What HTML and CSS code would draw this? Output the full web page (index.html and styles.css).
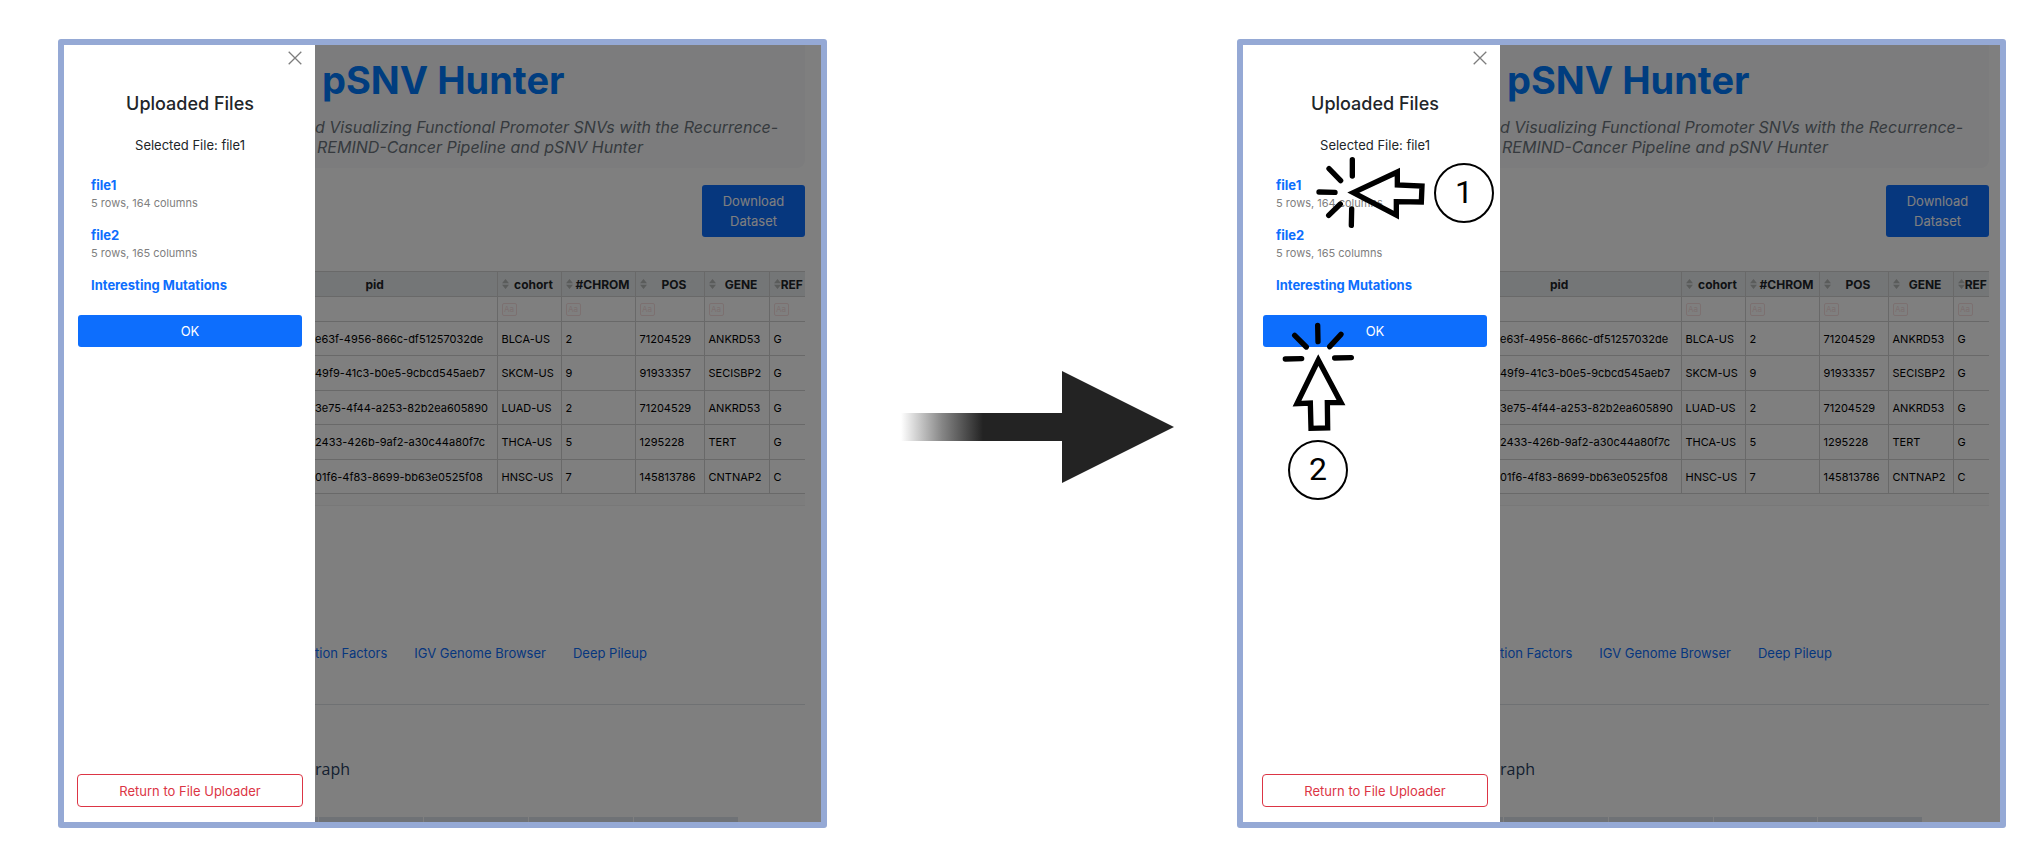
FILE: index.html
```html
<!DOCTYPE html>
<html lang="en">
<head>
<meta charset="utf-8">
<title>pSNV Hunter</title>
<link rel="stylesheet" href="styles.css">
</head>
<body>
<svg class="defs" aria-hidden="true">
  <symbol id="sort" viewBox="0 0 7 10"><path d="M3.5 0 7 4.3H0zM0 5.7h7L3.5 10z" fill="#b4b8b6"/></symbol>
  <symbol id="close" viewBox="0 0 14 14"><path d="M.7.7l12.600 12.600M13.300.7L.7 13.300" stroke="#7d7d7d" stroke-width="1.300" fill="none"/></symbol>
</svg>

<section class="frame">
  <aside class="drawer">
    <button class="close" aria-label="Close"><svg><use href="#close"/></svg></button>
    <h2 class="drawer-title">Uploaded Files</h2>
    <p class="selected">Selected File: file1</p>
    <ul class="files">
      <li><a href="#file1">file1</a><small>5 rows, 164 columns</small></li>
      <li><a href="#file2">file2</a><small>5 rows, 165 columns</small></li>
      <li><a href="#interesting">Interesting Mutations</a></li>
    </ul>
    <button class="ok">OK</button>
    <button class="return">Return to File Uploader</button>
  </aside>
  <main class="page">
    <header class="hero">
      <h1>pSNV Hunter</h1>
      <p>d Visualizing Functional Promoter SNVs with the Recurrence-</p>
      <p class="second">REMIND-Cancer Pipeline and pSNV Hunter</p>
    </header>
    <button class="download">Download Dataset</button>
    <div class="table-wrap">
      <table class="grid">
        <colgroup><col><col class="c64"><col class="c74"><col class="c69"><col class="c65"><col class="c36"></colgroup>
        <thead>
          <tr>
            <th class="pid">pid</th>
            <th><div><button aria-label="Sort"><svg><use href="#sort"/></svg></button><span>cohort</span></div></th>
            <th><div><button aria-label="Sort"><svg><use href="#sort"/></svg></button><span>#CHROM</span></div></th>
            <th><div><button aria-label="Sort"><svg><use href="#sort"/></svg></button><span>POS</span></div></th>
            <th><div><button aria-label="Sort"><svg><use href="#sort"/></svg></button><span>GENE</span></div></th>
            <th><div><button aria-label="Sort"><svg><use href="#sort"/></svg></button><span>REF</span></div></th>
          </tr>
          <tr class="filters"><td></td><td><button>Aa</button></td><td><button>Aa</button></td><td><button>Aa</button></td><td><button>Aa</button></td><td><button>Aa</button></td></tr>
        </thead>
        <tbody>
          <tr><td>e63f-4956-866c-df51257032de</td><td>BLCA-US</td><td>2</td><td>71204529</td><td>ANKRD53</td><td>G</td></tr>
          <tr><td>49f9-41c3-b0e5-9cbcd545aeb7</td><td>SKCM-US</td><td>9</td><td>91933357</td><td>SECISBP2</td><td>G</td></tr>
          <tr><td>3e75-4f44-a253-82b2ea605890</td><td>LUAD-US</td><td>2</td><td>71204529</td><td>ANKRD53</td><td>G</td></tr>
          <tr><td>2433-426b-9af2-a30c44a80f7c</td><td>THCA-US</td><td>5</td><td>1295228</td><td>TERT</td><td>G</td></tr>
          <tr><td>01f6-4f83-8699-bb63e0525f08</td><td>HNSC-US</td><td>7</td><td>145813786</td><td>CNTNAP2</td><td>C</td></tr>
        </tbody>
      </table>
      <div class="scroll-track"></div>
    </div>
    <nav class="tabs"><a href="#tf">tion Factors</a><a href="#igv">IGV Genome Browser</a><a href="#pileup">Deep Pileup</a></nav>
    <h3 class="graph">raph</h3>
    <div class="strip"><i></i><i></i><i></i><i></i><i></i></div>
    <div class="backdrop"></div>
  </main>
</section>

<svg class="arrow" viewBox="0 0 273 112" role="img" aria-label="Next step">
  <defs><linearGradient id="fade" gradientUnits="userSpaceOnUse" x1="0" y1="0" x2="82" y2="0"><stop offset="0" stop-color="#232323" stop-opacity="0"/><stop offset=".5" stop-color="#232323" stop-opacity=".55"/><stop offset="1" stop-color="#232323"/></linearGradient></defs>
  <path d="M0 42h161V0l112 56-112 56V70H0z" fill="url(#fade)"/>
</svg>

<section class="frame frame-after">
  <aside class="drawer">
    <button class="close" aria-label="Close"><svg><use href="#close"/></svg></button>
    <h2 class="drawer-title">Uploaded Files</h2>
    <p class="selected">Selected File: file1</p>
    <ul class="files">
      <li><a href="#file1">file1</a><small>5 rows, 164 columns</small></li>
      <li><a href="#file2">file2</a><small>5 rows, 165 columns</small></li>
      <li><a href="#interesting">Interesting Mutations</a></li>
    </ul>
    <button class="ok">OK</button>
    <button class="return">Return to File Uploader</button>
  </aside>
  <main class="page">
    <header class="hero">
      <h1>pSNV Hunter</h1>
      <p>d Visualizing Functional Promoter SNVs with the Recurrence-</p>
      <p class="second">REMIND-Cancer Pipeline and pSNV Hunter</p>
    </header>
    <button class="download">Download Dataset</button>
    <div class="table-wrap">
      <table class="grid">
        <colgroup><col><col class="c64"><col class="c74"><col class="c69"><col class="c65"><col class="c36"></colgroup>
        <thead>
          <tr>
            <th class="pid">pid</th>
            <th><div><button aria-label="Sort"><svg><use href="#sort"/></svg></button><span>cohort</span></div></th>
            <th><div><button aria-label="Sort"><svg><use href="#sort"/></svg></button><span>#CHROM</span></div></th>
            <th><div><button aria-label="Sort"><svg><use href="#sort"/></svg></button><span>POS</span></div></th>
            <th><div><button aria-label="Sort"><svg><use href="#sort"/></svg></button><span>GENE</span></div></th>
            <th><div><button aria-label="Sort"><svg><use href="#sort"/></svg></button><span>REF</span></div></th>
          </tr>
          <tr class="filters"><td></td><td><button>Aa</button></td><td><button>Aa</button></td><td><button>Aa</button></td><td><button>Aa</button></td><td><button>Aa</button></td></tr>
        </thead>
        <tbody>
          <tr><td>e63f-4956-866c-df51257032de</td><td>BLCA-US</td><td>2</td><td>71204529</td><td>ANKRD53</td><td>G</td></tr>
          <tr><td>49f9-41c3-b0e5-9cbcd545aeb7</td><td>SKCM-US</td><td>9</td><td>91933357</td><td>SECISBP2</td><td>G</td></tr>
          <tr><td>3e75-4f44-a253-82b2ea605890</td><td>LUAD-US</td><td>2</td><td>71204529</td><td>ANKRD53</td><td>G</td></tr>
          <tr><td>2433-426b-9af2-a30c44a80f7c</td><td>THCA-US</td><td>5</td><td>1295228</td><td>TERT</td><td>G</td></tr>
          <tr><td>01f6-4f83-8699-bb63e0525f08</td><td>HNSC-US</td><td>7</td><td>145813786</td><td>CNTNAP2</td><td>C</td></tr>
        </tbody>
      </table>
      <div class="scroll-track"></div>
    </div>
    <nav class="tabs"><a href="#tf">tion Factors</a><a href="#igv">IGV Genome Browser</a><a href="#pileup">Deep Pileup</a></nav>
    <h3 class="graph">raph</h3>
    <div class="strip"><i></i><i></i><i></i><i></i><i></i></div>
    <div class="backdrop"></div>
  </main>

  <svg class="click click-1" viewBox="255 378 336 222" aria-hidden="true">
    <g fill="none" stroke="#000" stroke-width="16" stroke-linecap="round" stroke-linejoin="round">
      <path d="M367 389v49M297 416l35 36M267 486l48 1M296 556l35-34M365 537l-1 49"/>
      <path stroke-linejoin="miter" d="M370 488L502 426V465L576 468 574 516 499 515V555Z"/>
    </g>
  </svg>
  <span class="step step-1">1</span>
  <svg class="click click-2" viewBox="156 216 222 333" aria-hidden="true">
    <g fill="none" stroke="#000" stroke-width="16" stroke-linecap="round" stroke-linejoin="round">
      <path d="M263 226l1 49M194 256l35 35M333 253l-34 37M166 327l49-1M314 324l50-1"/>
      <path stroke-linejoin="miter" d="M265 330L201 461 241 459 243 535 293 534 292 458 333 458Z"/>
    </g>
  </svg>
  <span class="step step-2">2</span>
</section>
</body>
</html>
```

FILE: styles.css
```css
* { box-sizing: border-box; }

body {
  margin: 0;
  min-height: 100vh;
  padding: 39px 35px 31px 58px;
  display: grid;
  grid-template-columns: 769fr 410fr 769fr;
  background: #fff;
  color: #212529;
  font-family: Inter, "Liberation Sans", sans-serif;
  font-size: 13px;
}

h1, h2, h3, p, ul { margin: 0; padding: 0; }
ul { list-style: none; }
a { color: #0d6efd; text-decoration: none; }
button { font: inherit; padding: 0; border: 0; background: none; cursor: pointer; }
svg { display: block; }
.defs { position: absolute; width: 0; height: 0; }

.frame {
  position: relative;
  display: flex;
  min-width: 0;
  border: 6px solid #95a9d5;
  border-radius: 3px;
}

/* Drawer */
.drawer {
  flex: none;
  width: 251px;
  display: flex;
  flex-direction: column;
  padding: 6px 12px 15px 13px;
  background: #fff;
}
.frame-after .drawer { width: 257px; padding-left: 19px; }
.close { align-self: flex-end; width: 14px; height: 14px; margin-right: 1px; }
.close svg { width: 14px; height: 14px; }
.drawer-title {
  margin-top: 27px;
  font-size: 18px;
  font-weight: 500;
  line-height: 24px;
  text-align: center;
}
.selected { margin-top: 19px; line-height: 20px; text-align: center; }
.files { padding: 20px 14px 0; }
.files li { margin-bottom: 14px; }
.files a { display: block; font-weight: 700; line-height: 20px; }
.files small { display: block; font-size: 11px; line-height: 16px; color: #808080; }
.ok {
  margin: 6px 1px 0;
  height: 32px;
  border-radius: 3px;
  background: #0d6efd;
  color: #fff;
}
.return {
  margin-top: auto;
  height: 33px;
  border: 1px solid #dc3545;
  border-radius: 4px;
  color: #dc3545;
}

/* Page under the backdrop */
.page {
  position: relative;
  flex: 1;
  min-width: 0;
  display: flex;
  flex-direction: column;
  padding-right: 16px;
  overflow: hidden;
  background: #fff;
}
.frame-after .page { padding-right: 11px; }
.backdrop { position: absolute; inset: 0; background: rgba(0, 0, 0, .5); }

.hero {
  height: 123px;
  padding-top: 10px;
  border-radius: 0 0 8px 0;
  background: #f8f9fa;
  color: #6c757d;
  white-space: nowrap;
}
.hero h1 {
  padding-left: 7px;
  margin-bottom: 12px;
  color: #007bff;
  font-size: 38px;
  font-weight: 700;
  line-height: 50px;
}
.hero p { font-size: 16px; font-style: italic; font-weight: 400; line-height: 20px; }
.hero .second { padding-left: 2px; }

.download {
  align-self: flex-end;
  width: 103px;
  margin-top: 17px;
  padding: 6px 16px;
  border-radius: 3px;
  background: #0d6efd;
  color: #fff;
  line-height: 20px;
}

.table-wrap { margin-top: 34px; overflow: hidden; }
.grid {
  width: 100%;
  table-layout: fixed;
  border-collapse: collapse;
  color: #000;
  font-size: 11px;
  white-space: nowrap;
}
.c64 { width: 64px; }
.c74 { width: 74px; }
.c69 { width: 69px; }
.c65 { width: 65px; }
.c36 { width: 36px; }
.grid th, .grid td { height: 34px; padding: 0 0 0 4px; border: 1px solid #d3d3d3; text-align: left; }
.grid tbody tr:nth-child(even) td { height: 35px; }
.grid tr > :first-child { padding-left: 0; border-left: 0; }
.grid tr > :last-child { border-right: 0; }
.grid thead th { height: 25px; background: #e9ecef; color: #212529; font-size: 12px; font-weight: 700; }
.grid .pid { padding-right: 62px; text-align: center; }
.grid th div { display: flex; align-items: center; padding-right: 2px; }
.grid th span { flex: 1; text-align: center; }
.grid th svg { width: 7px; height: 10px; }
.grid .filters td { height: 25px; }
.filters button {
  display: block;
  width: 15px;
  height: 13px;
  border: 1px solid #f8e0e0;
  border-radius: 2px;
  color: #f8e0e0;
  font-size: 8px;
  line-height: 11px;
}
.scroll-track { height: 12px; border-bottom: 1px solid #f0f0f0; background: #fafafa; }

.tabs {
  display: flex;
  gap: 27px;
  margin-top: 137px;
  padding-bottom: 41px;
  border-bottom: 1px solid #dee2e6;
  line-height: 20px;
  white-space: nowrap;
}
.graph { margin-top: 54px; color: #2a3f5f; font-family: "Open Sans", sans-serif; font-size: 16px; font-weight: 400; line-height: 20px; }
.strip { display: flex; gap: 1px; height: 5px; margin-top: auto; padding-right: 67px; }
.strip i { flex: 84 1 0; background: #dfe5ec; }
.strip i:first-child { flex: none; width: 3px; }

/* Annotations */
.arrow { width: 273px; max-width: 100%; margin: 0 0 14px 10px; align-self: center; justify-self: center; }
.click, .step { position: absolute; }
.click-1 { left: 72px; top: 111px; width: 112px; height: 74px; }
.click-2 { left: 39px; top: 277px; width: 74px; height: 111px; }
.step {
  display: flex;
  align-items: center;
  justify-content: center;
  width: 60px;
  height: 60px;
  padding-bottom: 3px;
  border: 2px solid #000;
  border-radius: 50%;
  color: #000;
  font: 32px Roboto, sans-serif;
}
.step-1 { left: 191px; top: 118px; }
.step-2 { left: 45px; top: 395px; }
```
